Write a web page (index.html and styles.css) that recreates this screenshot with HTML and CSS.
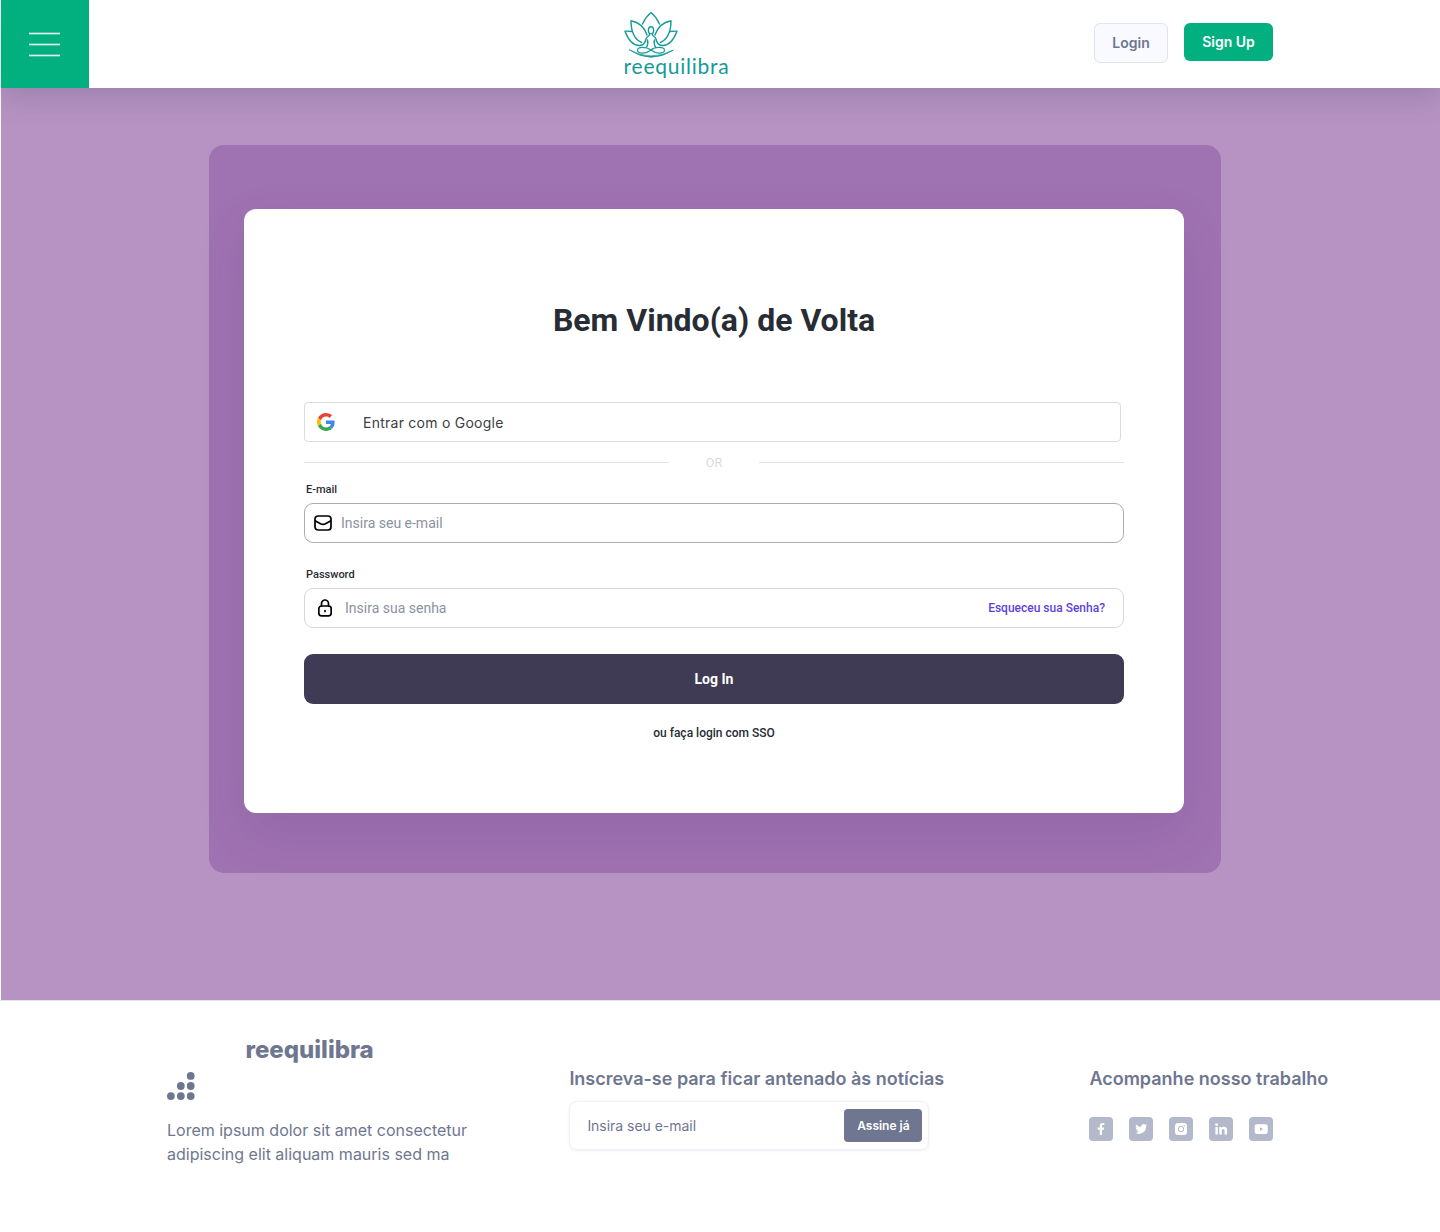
FILE: index.html
```html
<!DOCTYPE html>
<html lang="pt-BR">
<head>
<meta charset="utf-8">
<title>reequilibra</title>
<link rel="stylesheet" href="styles.css">
</head>
<body>
<header class="topbar">
  <button class="menu" aria-label="Menu"><span></span><span></span><span></span></button>
  <a class="logo" aria-label="reequilibra">
    <svg width="112" height="72" viewBox="0 0 112 72" fill="none" stroke="#159a98" stroke-width="1.4" stroke-linejoin="round" stroke-linecap="round">
      <path d="M22.500 16Q25.500 9 31 4.500Q36.500 9 39.500 16"/>
      <path d="M27 27C25 21 20 14.500 11 12.800C11 23 14 31 21.500 34.500"/>
      <path d="M35 27C37 21 42 14.500 51 12.800C51 23 48 31 40.500 34.500"/>
      <path d="M11.500 23.500Q8 23 5 23.200C8 31 12 38 20 37.500C25 37 25.500 33 26 31C26.500 28.500 29.500 28.500 29.500 26.500"/>
      <path d="M50.500 23.500Q54 23 57 23.200C54 31 50 38 42 37.500C37 37 36.500 33 36 31C35.500 28.500 32.500 28.500 32.500 26.500"/>
      <ellipse cx="31" cy="22.300" rx="2.600" ry="3.600"/>
      <path d="M27.500 32Q28.500 36 26.500 39M34.500 32Q33.500 36 35.500 39"/>
      <path stroke-width="1.2" d="M31 42C26 38.500 17.500 38.500 17.500 42.300C17.500 46.500 27 45.500 31 42C35 38.500 44.500 38.500 44.500 42.300C44.500 46.500 35 45.500 31 42"/>
      <path d="M9.500 42Q31 56.600 53.500 42Q31 54 9.500 42Z" stroke-width=".8" fill="#159a98"/>
      <text class="logo-text" x="3.600" y="65.800" textLength="105">reequilibra</text>
    </svg>
  </a>
  <nav class="actions">
    <a class="btn btn-login">Login</a>
    <a class="btn btn-signup">Sign Up</a>
  </nav>
</header>

<main class="stage">
  <div class="panel">
    <section class="card">
      <h1>Bem Vindo(a) de Volta</h1>
      <a class="google">
        <svg width="18" height="18" viewBox="0 0 48 48">
          <path fill="#ea4335" d="M24 9.500c3.540 0 6.710 1.220 9.210 3.600l6.850-6.850C35.900 2.380 30.470 0 24 0 14.620 0 6.510 5.380 2.560 13.220l7.980 6.190C12.430 13.720 17.740 9.500 24 9.500z"/>
          <path fill="#4285f4" d="M46.980 24.550c0-1.570-.15-3.090-.38-4.550H24v9.020h12.940c-.58 2.960-2.260 5.480-4.780 7.180l7.730 6c4.510-4.180 7.090-10.360 7.090-17.650z"/>
          <path fill="#fbbc05" d="M10.530 28.590c-.48-1.450-.76-2.990-.76-4.590s.27-3.140.76-4.590l-7.980-6.190C.92 16.460 0 20.120 0 24s.92 7.540 2.560 10.780l7.970-6.190z"/>
          <path fill="#34a853" d="M24 48c6.480 0 11.930-2.130 15.890-5.810l-7.730-6c-2.150 1.450-4.920 2.300-8.160 2.300-6.260 0-11.570-4.220-13.470-9.910l-7.980 6.190C6.510 42.620 14.620 48 24 48z"/>
        </svg>
        <span>Entrar com o Google</span>
      </a>
      <div class="divider"><span>OR</span></div>
      <label class="label">E-mail</label>
      <div class="field field-email">
        <svg width="18" height="16" viewBox="0 0 18 16" fill="none" stroke="#000" stroke-width="1.700" stroke-linecap="round" stroke-linejoin="round"><rect x="1" y="1" width="16" height="14" rx="3"/><path d="M1.500 6L6.500 8.700Q9 10 11.500 8.700L16.500 6"/></svg>
        <span>Insira seu e-mail</span>
      </div>
      <label class="label">Password</label>
      <div class="field field-password">
        <svg width="14" height="18" viewBox="0 0 14 18" fill="none" stroke="#000" stroke-width="1.700" stroke-linecap="round"><rect x=".8" y="7" width="12.400" height="9.800" rx="2.800"/><path d="M3.500 7V4.500a3.500 3.500 0 0 1 7 0V7M7 11.500v1"/></svg>
        <span>Insira sua senha</span>
        <a class="forgot">Esqueceu sua Senha?</a>
      </div>
      <button class="submit">Log In</button>
      <a class="sso">ou faça login com SSO</a>
    </section>
  </div>
</main>

<footer class="footer">
  <div class="brand">
    <strong>reequilibra</strong>
    <svg width="28" height="28" viewBox="0 0 28 28" fill="#6f7690"><circle cx="23.700" cy="3.900" r="3.900"/><circle cx="13.800" cy="14" r="3.900"/><circle cx="23.700" cy="14" r="3.900"/><circle cx="3.900" cy="24.100" r="3.900"/><circle cx="13.800" cy="24.100" r="3.900"/><circle cx="23.700" cy="24.100" r="3.900"/></svg>
    <p>Lorem ipsum dolor sit amet consectetur<br>adipiscing elit aliquam mauris sed ma</p>
  </div>
  <div class="news">
    <h2>Inscreva-se para ficar antenado às notícias</h2>
    <div class="subscribe"><span>Insira seu e-mail</span><button>Assine já</button></div>
  </div>
  <div class="follow">
    <h2>Acompanhe nosso trabalho</h2>
    <div class="social">
      <a aria-label="Facebook"><svg viewBox="0 0 24 24"><path d="M10.800 18v-5.300H8.700v-2.100h2.100V9c0-2 1.100-3.100 3-3.100.8 0 1.500.1 1.500.1v1.900h-1.100c-.9 0-1.200.5-1.200 1.100v1.600h2.200l-.4 2.100H13V18z"/></svg></a>
      <a aria-label="Twitter"><svg viewBox="0 0 24 24"><path d="M18.200 8.100c-.4.200-.9.300-1.400.4.500-.3.900-.8 1.100-1.300-.5.300-1 .5-1.600.6a2.500 2.500 0 0 0-4.200 2.300A7 7 0 0 1 7 7.500a2.500 2.500 0 0 0 .8 3.300c-.4 0-.8-.1-1.100-.3 0 1.200.8 2.200 2 2.500-.4.100-.7.100-1.100 0 .3 1 1.200 1.700 2.300 1.700A5 5 0 0 1 6.200 15.800 7.100 7.100 0 0 0 17 9.400c.5-.4.900-.8 1.200-1.300z"/></svg></a>
      <a aria-label="Instagram"><svg viewBox="0 0 24 24"><rect x="6" y="6" width="12" height="12" rx="3.300"/><circle cx="12" cy="12" r="2.700" fill="none" stroke="#b3b8ca" stroke-width="1"/><circle cx="15.200" cy="8.800" r=".7" fill="#b3b8ca"/></svg></a>
      <a aria-label="LinkedIn"><svg viewBox="0 0 24 24"><circle cx="7.600" cy="7.700" r="1.400"/><path d="M6.400 10h2.400v7.500H6.400zM10.300 10h2.300v1c.4-.7 1.200-1.200 2.400-1.200 2.500 0 3 1.600 3 3.700v4h-2.400v-3.600c0-.9 0-2-1.200-2s-1.600 1-1.600 1.900v3.700h-2.500z"/></svg></a>
      <a aria-label="YouTube"><svg viewBox="0 0 24 24"><rect x="5.700" y="7.300" width="13" height="9.600" rx="2.200"/><path d="M11 10.300v3.600l3-1.800z" fill="#b3b8ca"/></svg></a>
    </div>
  </div>
</footer>
</body>
</html>
```
FILE: styles.css
```css
* { box-sizing: border-box; }
body { margin: 0; background: #fff; font-family: Inter, sans-serif; color: #6f7690; white-space: nowrap; }
button { font: inherit; border: 0; padding: 0; }
h1, h2, p { margin: 0; }
svg { display: block; flex: none; }

.topbar { position: relative; display: flex; height: 88px; margin-left: 1px; background: #fff; box-shadow: 0 10px 30px rgba(60, 60, 80, .2); }
.menu { display: flex; flex-direction: column; align-items: flex-start; gap: 10px; width: 88px; height: 88px; padding: 33px 0 0 28px; background: #02af7f; }
.menu span { width: 31px; height: 1px; background: #e4f3ee; box-shadow: 0 1px rgba(255, 255, 255, .28), 0 -1px rgba(255, 255, 255, .28); }
.logo { margin: 8px 0 0 531px; }
.logo-text { font: 400 21px Lato, sans-serif; fill: #159a98; stroke: none; }
.actions { display: flex; align-items: flex-start; gap: 16px; margin: 23px 0 0 362px; }
.btn { display: flex; align-items: center; justify-content: center; padding-bottom: 1px; font-size: 14px; font-weight: 600; border-radius: 6px; }
.btn-login { width: 74px; height: 40px; background: #f8faff; border: 1px solid #e1e4ed; }
.btn-signup { width: 89px; height: 38px; background: #02af7f; color: #fff; }

.stage { height: 912px; margin-left: 1px; padding: 57px 219px 127px 208px; background: #b693c3; }
.panel { height: 728px; padding: 64px 37px 60px 35px; background: #9f72b1; border-radius: 15px; }
.card { display: flex; flex-direction: column; height: 604px; padding: 91px 60px 0; background: #fff; border-radius: 12px; font-family: Roboto, sans-serif; box-shadow: 0 20px 50px rgba(80, 50, 110, .14); }
.card h1 { height: 40px; line-height: 41px; font-size: 32px; font-weight: 700; text-align: center; color: #282c34; }
.google { display: flex; align-items: center; gap: 28px; width: 817px; height: 40px; margin-top: 62px; padding-left: 12px; border: 1px solid #dadce0; border-radius: 4px; font-family: Inter, sans-serif; font-size: 14px; letter-spacing: .25px; color: #3c4043; font-weight: 400; }
.divider { display: flex; align-items: center; height: 41px; font-size: 12.500px; color: #d9dbe0; }
.divider span { width: 90px; text-align: center; }
.divider::before, .divider::after { content: ""; flex: 1; height: 1px; background: #e2e3e6; }
.label { height: 20px; padding: 0 2px; line-height: 14px; font-size: 11px; font-weight: 500; color: #282c34; }
.field { display: flex; align-items: center; height: 40px; border: 1px solid #d5d8de; border-radius: 9px; font-size: 14px; color: #8b92a1; }
.field-email { margin-bottom: 25px; padding-left: 9px; gap: 9px; border-color: #a7acb8; }
.field-password { padding: 0 18px 0 13px; gap: 13px; }
.forgot { margin-left: auto; font-size: 12px; font-weight: 500; color: #5e3fdc; }
.submit { height: 50px; margin-top: 26px; background: #3f3b54; border-radius: 9px; color: #fff; font-size: 14px; font-weight: 700; }
.sso { margin-top: 22px; line-height: 14px; font-size: 12px; font-weight: 500; text-align: center; color: #282c34; }

.footer { display: flex; height: 232px; border-top: 1px solid #e1e4ed; padding-left: 167px; }
.brand { width: 402.400px; padding-top: 34px; }
.brand strong { display: block; height: 37px; margin-left: 78.500px; line-height: 30px; font-size: 24px; font-weight: 800; }
.brand p { margin-top: 18px; font-size: 16px; line-height: 24px; }
.footer h2 { font-size: 18px; font-weight: 600; line-height: 24px; }
.news { width: 520px; padding-top: 66px; }
.news h2 { letter-spacing: -.01px; }
.subscribe { display: flex; align-items: center; justify-content: space-between; width: 360px; height: 49px; margin-top: 10px; padding: 0 6px 0 17px; border: 1px solid #f0f1f6; border-radius: 8px; font-size: 14px; letter-spacing: -.03px; box-shadow: 0 1px 3px rgba(25, 33, 61, .08); }
.subscribe button { width: 78px; height: 33px; background: #6f7690; color: #fff; border-radius: 4px; font-size: 12px; font-weight: 600; }
.follow { padding-top: 66px; }
.social { display: flex; gap: 16px; margin-top: 26px; }
.social a { width: 24px; height: 24px; background: #b3b8ca; border-radius: 4px; }
.social svg { width: 24px; height: 24px; fill: #fff; }
```
